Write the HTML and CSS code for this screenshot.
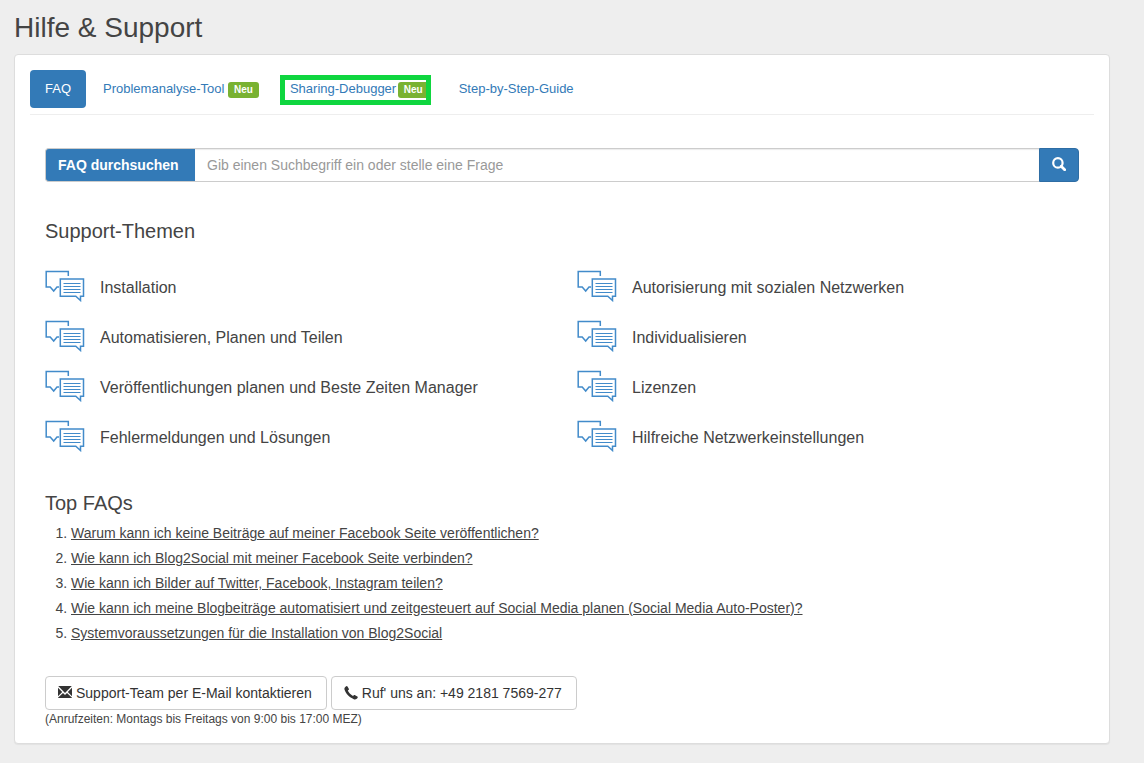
FILE: index.html
```html
<!DOCTYPE html>
<html lang="de">
<head>
  <meta charset="UTF-8">
  <meta name="viewport" content="width=device-width, initial-scale=1.0">
  <title>Hilfe &amp; Support</title>
  <link rel="stylesheet" href="styles.css">
</head>
<body>
  <svg class="sprite" aria-hidden="true">
    <symbol id="icon-chat" viewBox="0 0 40 32">
      <g fill="none" stroke="currentColor" stroke-width="1.5">
        <path d="M23.300 6V1.500H1.200V17h4l3.500 4 3.300-4h2"/>
        <path d="M15.300 9h23.200v17.300h-3v4.200l-4.700-4.200H15.300z"/>
        <path d="M18.500 13.500h17M18.500 16.500h17M18.500 19.500h17M18.500 22.500h17" stroke-width="1.200"/>
      </g>
    </symbol>
  </svg>

  <main class="wrap">
    <h1>Hilfe &amp; Support</h1>

    <div class="panel">
      <nav class="tabs">
        <a href="#faq" class="tab active">FAQ</a>
        <a href="#tool" class="tab">Problemanalyse-Tool <span class="label">Neu</span></a>
        <a href="#debugger" class="tab marked">Sharing-Debugger <span class="label">Neu</span></a>
        <a href="#guide" class="tab">Step-by-Step-Guide</a>
      </nav>

      <div class="content">
        <form class="search">
          <label for="faq-search">FAQ durchsuchen</label>
          <input type="text" id="faq-search" placeholder="Gib einen Suchbegriff ein oder stelle eine Frage">
          <button type="submit" aria-label="Suchen">
            <svg width="14" height="14" viewBox="0 0 14 14" fill="none" stroke="currentColor">
              <circle cx="5.900" cy="5.900" r="4.700" stroke-width="2.200"/>
              <path d="M9.200 9.200l3.500 3.500" stroke-width="2.800" stroke-linecap="round"/>
            </svg>
          </button>
        </form>

        <h2>Support-Themen</h2>
        <div class="topics">
          <a href="#"><svg><use href="#icon-chat"/></svg>Installation</a>
          <a href="#"><svg><use href="#icon-chat"/></svg>Autorisierung mit sozialen Netzwerken</a>
          <a href="#"><svg><use href="#icon-chat"/></svg>Automatisieren, Planen und Teilen</a>
          <a href="#"><svg><use href="#icon-chat"/></svg>Individualisieren</a>
          <a href="#"><svg><use href="#icon-chat"/></svg>Veröffentlichungen planen und Beste Zeiten Manager</a>
          <a href="#"><svg><use href="#icon-chat"/></svg>Lizenzen</a>
          <a href="#"><svg><use href="#icon-chat"/></svg>Fehlermeldungen und Lösungen</a>
          <a href="#"><svg><use href="#icon-chat"/></svg>Hilfreiche Netzwerkeinstellungen</a>
        </div>

        <h2>Top FAQs</h2>
        <ol class="faqs">
          <li><a href="#">Warum kann ich keine Beiträge auf meiner Facebook Seite veröffentlichen?</a></li>
          <li><a href="#">Wie kann ich Blog2Social mit meiner Facebook Seite verbinden?</a></li>
          <li><a href="#">Wie kann ich Bilder auf Twitter, Facebook, Instagram teilen?</a></li>
          <li><a href="#">Wie kann ich meine Blogbeiträge automatisiert und zeitgesteuert auf Social Media planen (Social Media Auto-Poster)?</a></li>
          <li><a href="#">Systemvoraussetzungen für die Installation von Blog2Social</a></li>
        </ol>

        <div class="contact">
          <button type="button" class="btn">
            <svg width="14" height="14" viewBox="0 0 14 14" fill="currentColor">
              <path d="M.2 0h13.600L7 7zM0 1.700l4.200 4.400L0 10.300zM14 1.700v8.600L9.800 6.100zM5 7l2 2 2-2 5 4.800v.2H0v-.2z"/>
            </svg>
            Support-Team per E-Mail kontaktieren
          </button>
          <button type="button" class="btn">
            <svg width="14" height="14" viewBox="0 0 14 14" fill="currentColor">
              <path d="M2.300.2c.5-.3.900-.1 1.200.4l1.300 2.200c.3.500.1.900-.3 1.200l-.7.600c.8 2 2.800 4.200 5.200 5.500l.8-.8c.4-.4.800-.4 1.300-.1l2.200 1.400c.6.400.6.900.2 1.400-.8 1.200-2.200 1.800-3.700 1.200C5.500 11.500 1.700 7.800.5 3.600.1 2.200.9.900 2.300.2z"/>
            </svg>
            Ruf' uns an: +49 2181 7569-277
          </button>
        </div>
        <p class="hours">(Anrufzeiten: Montags bis Freitags von 9:00 bis 17:00 MEZ)</p>
      </div>
    </div>
  </main>
</body>
</html>
```
FILE: styles.css
```css
* {
  box-sizing: border-box;
}
body {
  margin: 0;
  background: #eee;
  color: #444;
  font-family: "Liberation Sans", Arial, sans-serif;
  font-size: 14px;
  line-height: 20px;
}
a {
  color: #337ab7;
  text-decoration: none;
}
.sprite {
  display: none;
}
.wrap {
  padding: 12px 34px 19px 14px;
}
h1 {
  margin: 0 0 10px;
  font-size: 28px;
  font-weight: normal;
  line-height: 32px;
}
h2 {
  margin: 0;
  font-size: 20px;
  font-weight: normal;
  line-height: 24px;
}
.panel {
  padding: 15px;
  background: #fff;
  border: 1px solid #ddd;
  border-radius: 4px;
  box-shadow: 0 1px 1px rgba(0,0,0,0.05);
}

.tabs {
  display: flex;
  align-items: center;
  gap: 2px;
  padding-bottom: 6px;
  border-bottom: 1px solid #eee;
  font-size: 13px;
}
.tab {
  padding: 9px 15px;
  border-radius: 4px;
}
.tab.active {
  background: #337ab7;
  color: #fff;
}
.tab.marked {
  position: relative;
  margin: 0 11px 0 4px;
  padding: 5px 2px 5px 10px;
}
.tab.marked::after {
  content: "";
  position: absolute;
  inset: 1px 0 -1px;
  border: 5px solid #0fd63f;
}
.tab.marked .label {
  margin-left: -2px;
}
.label {
  display: inline-block;
  padding: 0 6px;
  border-radius: 3px;
  background: #79b232;
  color: #fff;
  font-size: 10px;
  font-weight: bold;
  line-height: 16px;
}

.content {
  padding: 33px 15px 0;
}
.search {
  display: flex;
  height: 34px;
  margin-bottom: 37px;
}
.search label {
  min-width: 150px;
  padding: 6px 12px;
  border: 1px solid #ccc;
  border-right: 0;
  border-radius: 4px 0 0 4px;
  background: #337ab7;
  color: #fff;
  font-weight: bold;
}
.search input {
  flex: 1;
  min-width: 0;
  padding: 6px 12px;
  border: 1px solid #ccc;
  border-width: 1px 0;
  box-shadow: inset 0 1px 1px rgba(0,0,0,0.08);
  font: inherit;
}
.search input::placeholder {
  color: #999;
}
.search button {
  width: 40px;
  padding: 0;
  border: 1px solid #2e6da4;
  border-radius: 0 4px 4px 0;
  background: #337ab7;
  color: #fff;
}

.topics {
  display: grid;
  grid-template-columns: 1fr 1fr;
  grid-auto-rows: 50px;
  column-gap: 30px;
  margin: 20px 0 28px;
}
.topics a {
  display: flex;
  align-items: center;
  gap: 15px;
  color: #444;
  font-size: 16px;
}
.topics svg {
  flex: none;
  width: 40px;
  height: 32px;
  margin-bottom: 4px;
  color: #428bca;
}

.faqs {
  margin: 6px 0 30px;
  padding-left: 26px;
}
.faqs li {
  line-height: 25px;
}
.faqs a {
  color: #444;
  text-decoration: underline;
}

.contact {
  display: flex;
  flex-wrap: wrap;
  gap: 4px;
}
.btn {
  display: flex;
  align-items: center;
  gap: 4px;
  height: 34px;
  padding: 0 14px 0 12px;
  border: 1px solid #ccc;
  border-radius: 4px;
  background: #fff;
  color: #333;
  font: inherit;
}
.hours {
  margin: 0;
  font-size: 12px;
  line-height: 18px;
}
```
